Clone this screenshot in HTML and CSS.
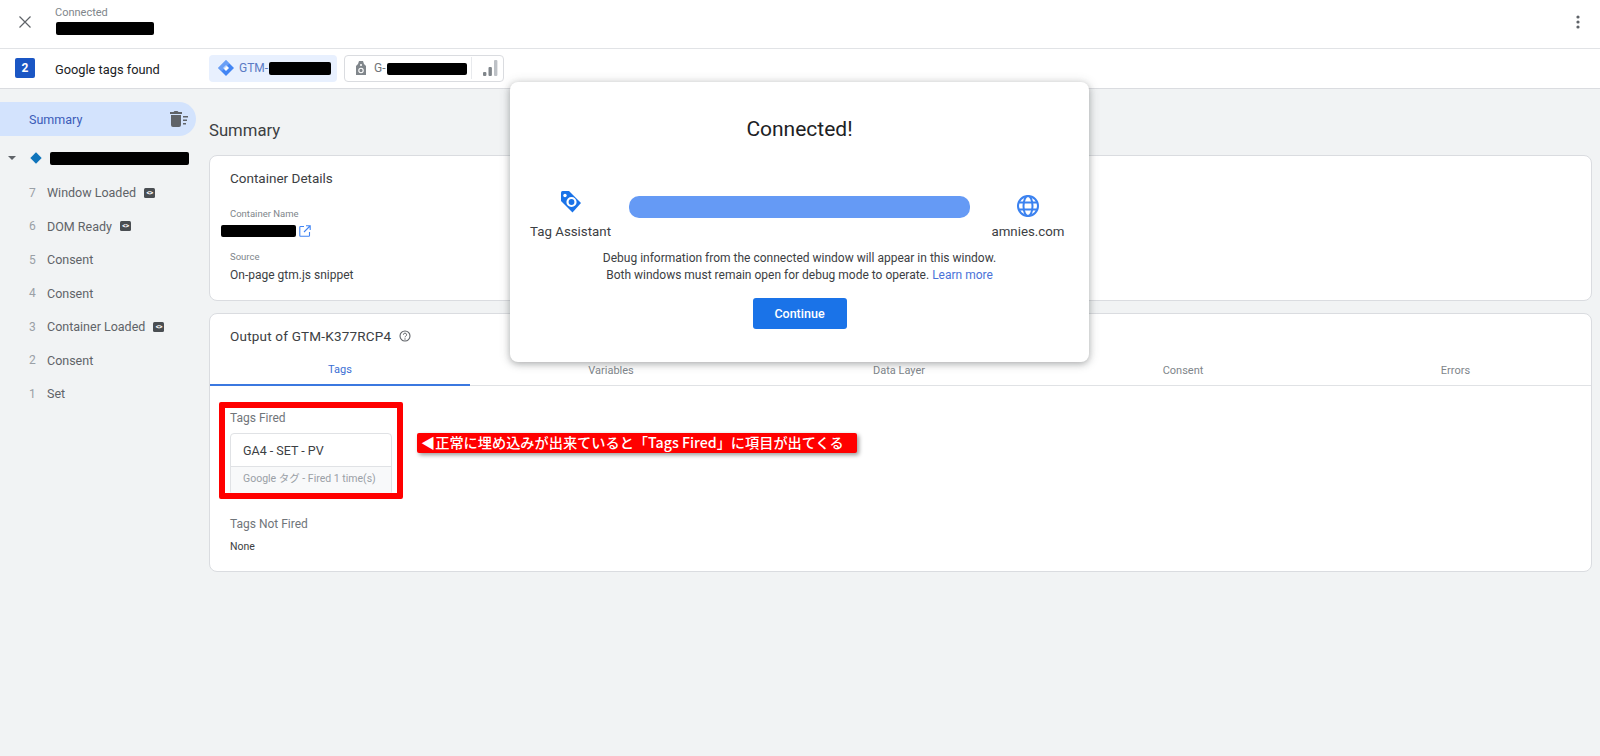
FILE: index.html
```html
<!DOCTYPE html>
<html lang="en">
<head>
<meta charset="utf-8">
<title>Tag Assistant</title>
<link rel="stylesheet" href="styles.css">
</head>
<body>
<header class="topbar">
  <svg class="close" viewBox="0 0 14 14" width="14" height="14"><path d="M1.500 1.500l11 11M12.500 1.500l-11 11" stroke="#5f6368" stroke-width="1.200" fill="none"/></svg>
  <div class="conn">
    <div class="conn-label">Connected</div>
    <div class="redact r-url"></div>
  </div>
  <svg class="dots" viewBox="0 0 4 14" width="4" height="14"><circle cx="2" cy="2" r="1.600" fill="#5f6368"/><circle cx="2" cy="7" r="1.600" fill="#5f6368"/><circle cx="2" cy="12" r="1.600" fill="#5f6368"/></svg>
</header>
<div class="tagsbar">
  <span class="count">2</span>
  <span class="found">Google tags found</span>
  <div class="chip chip-gtm">
    <svg viewBox="0 0 18 18" width="18" height="18"><path d="M9 1l8 8-8 8-8-8z" fill="#4285f4"/><path d="M9 6l3 3-3 3-3-3z" fill="#fff"/><path d="M9 1l3.500 3.500L5 12 1 9z" fill="#8ab4f8" opacity=".55"/></svg>
    <span class="chip-text">GTM-</span><span class="redact r-gtm"></span>
  </div>
  <div class="chip chip-g">
    <svg viewBox="0 0 12 16" width="12" height="16"><path d="M4 1h4l1 3 2 2v9H1V6l2-2z" fill="#80868b"/><circle cx="6" cy="5" r="1" fill="#fff"/><circle cx="6" cy="10.500" r="2.200" fill="none" stroke="#fff" stroke-width="1.100"/></svg>
    <span class="chip-text grey">G-</span><span class="redact r-g"></span>
    <span class="chip-div"></span>
    <svg viewBox="0 0 15 16" width="15" height="16"><rect x="0" y="12" width="3.400" height="4" rx="1" fill="#80868b"/><rect x="5.500" y="7" width="3.400" height="9" rx="1" fill="#80868b"/><rect x="11" y="0" width="3.400" height="16" rx="1" fill="#bdc1c6"/></svg>
  </div>
</div>
<div class="app">
  <nav class="side">
    <div class="side-summary">
      <span>Summary</span>
      <svg viewBox="0 0 18 16" width="18" height="16"><path d="M1 4h10v10a2 2 0 0 1-2 2H3a2 2 0 0 1-2-2zM0 1h3.500l1-1h3l1 1H12v2H0z" fill="#5f6368"/><path d="M13 5h5v1.500h-5zM13 8.500h4V10h-4zM13 12h3v1.500h-3z" fill="#5f6368"/></svg>
    </div>
    <div class="side-head">
      <span class="caret"></span>
      <span class="mini-diamond"></span>
      <span class="redact r-side"></span>
    </div>
    <ul class="events">
      <li><span class="num">7</span>Window Loaded<span class="code">&lt;&gt;</span></li>
      <li><span class="num">6</span>DOM Ready<span class="code">&lt;&gt;</span></li>
      <li><span class="num">5</span>Consent</li>
      <li><span class="num">4</span>Consent</li>
      <li><span class="num">3</span>Container Loaded<span class="code">&lt;&gt;</span></li>
      <li><span class="num">2</span>Consent</li>
      <li><span class="num">1</span>Set</li>
    </ul>
  </nav>
  <main class="main">
    <h1 class="page-title">Summary</h1>
    <section class="card card-details">
      <h2 class="card-title">Container Details</h2>
      <div class="field-label">Container Name</div>
      <div class="name-row">
        <span class="redact r-name"></span>
        <svg viewBox="0 0 12 12" width="12" height="12"><path d="M5 1.500H1.500a.7.7 0 0 0-.7.700v8.300a.7.7 0 0 0 .7.700h8.300a.7.7 0 0 0 .7-.7V7M7 .8h4.200V5M11 1L5 7" fill="none" stroke="#4285f4" stroke-width="1.100"/></svg>
      </div>
      <div class="field-label source">Source</div>
      <div class="field-value">On-page gtm.js snippet</div>
    </section>
    <section class="card card-output">
      <h2 class="card-title output-title">Output of GTM-K377RCP4
        <svg viewBox="0 0 12 12" width="12" height="12"><circle cx="6" cy="6" r="5" fill="none" stroke="#5f6368" stroke-width="1.100"/><path d="M4.400 4.700A1.600 1.600 0 1 1 6.700 6.200C6.200 6.500 6 6.800 6 7.300" fill="none" stroke="#5f6368" stroke-width="1"/><circle cx="6" cy="9" r=".7" fill="#5f6368"/></svg>
      </h2>
      <div class="tabs">
        <div class="tab active">Tags</div>
        <div class="tab">Variables</div>
        <div class="tab">Data Layer</div>
        <div class="tab">Consent</div>
        <div class="tab">Errors</div>
      </div>
      <div class="panel">
        <h3 class="panel-label">Tags Fired</h3>
        <div class="tile">
          <div class="tile-title">GA4 - SET - PV</div>
          <div class="tile-foot">Google タグ - Fired 1 time(s)</div>
        </div>
        <h3 class="panel-label not-fired">Tags Not Fired</h3>
        <div class="none">None</div>
      </div>
    </section>
  </main>
</div>

<div class="highlight"></div>
<div class="callout">◀正常に埋め込みが出来ていると「Tags Fired」に項目が出てくる</div>

<div class="modal">
  <h2 class="modal-title">Connected!</h2>
  <div class="modal-flow">
    <div class="end end-left">
      <svg viewBox="0 0 24 24" width="24" height="24"><path d="M2 2.500A1.500 1.500 0 0 1 3.500 1H10l12 12-8.500 9.500L2 11z" fill="#1a73e8"/><circle cx="6" cy="5.500" r="1.700" fill="#fff"/><circle cx="12.500" cy="12" r="4" fill="none" stroke="#fff" stroke-width="2.200"/></svg>
      <span>Tag Assistant</span>
    </div>
    <div class="modal-bar"></div>
    <div class="end end-right">
      <svg viewBox="0 0 24 24" width="24" height="24"><g fill="none" stroke="#3b82f0" stroke-width="2"><circle cx="12" cy="12" r="10"/><ellipse cx="12" cy="12" rx="4.500" ry="10"/><path d="M2.800 8.500h18.400M2.800 15.500h18.400"/></g></svg>
      <span>amnies.com</span>
    </div>
  </div>
  <p class="modal-text">Debug information from the connected window will appear in this window.<br>Both windows must remain open for debug mode to operate. <a class="learn">Learn more</a></p>
  <button class="continue">Continue</button>
</div>
</body>
</html>
```
FILE: styles.css
```css
* { box-sizing: border-box; }
html, body { margin: 0; height: 100%; overflow: hidden; }
body { font-family: Roboto, "Noto Sans CJK JP", sans-serif; background: #f1f3f4; color: #3c4043; position: relative; }
h1, h2, h3, p, ul { margin: 0; padding: 0; font-weight: 400; }
ul { list-style: none; }
.redact { display: inline-block; background: #000; border-radius: 2px; }

.topbar { height: 49px; background: #fff; border-bottom: 1px solid #e1e3e6; display: flex; align-items: center; padding: 0 20px 4px 18px; }
.close { margin-right: 23px; flex: none; }
.conn { flex: 1; padding: 2px 0 5px; }
.conn-label { font-size: 11px; line-height: 12px; color: #80868b; margin-bottom: 3px; }
.r-url { display: block; width: 98px; height: 13px; margin-left: 1px; }

.tagsbar { height: 40px; background: #fff; border-bottom: 1px solid #dadce0; display: flex; align-items: center; padding: 0 0 1px 15px; }
.count { width: 20px; height: 20px; border-radius: 2px; background: #1a56c4; color: #fff; font-size: 12px; font-weight: 700; display: flex; align-items: center; justify-content: center; }
.found { font-size: 12.800px; color: #202124; margin-left: 20px; width: 154px; padding-top: 2px; }
.chip { height: 27px; display: flex; align-items: center; border-radius: 4px; }
.chip-gtm { width: 128px; background: #e8f0fe; padding-left: 8px; }
.chip-text { font-size: 12px; color: #5b7bc4; margin-left: 4px; }
.chip-text.grey { color: #70757a; margin-left: 7px; }
.r-gtm { width: 62px; height: 13px; margin: 1px 0 0 1px; }
.chip-g { width: 160px; margin-left: 7px; border: 1px solid #dadce0; padding-left: 10px; }
.r-g { width: 80px; height: 12px; margin: 2px 0 0 1px; }
.chip-div { width: 1px; height: 22px; background: #e8eaed; margin: 0 11px 0 4px; }

.app { display: flex; height: 667px; }
.side { width: 209px; flex: none; padding-top: 13px; }
.side-summary { width: 196px; height: 34px; background: #d3e3fd; border-radius: 0 17px 17px 0; display: flex; align-items: center; justify-content: space-between; padding: 0 8px 0 29px; font-size: 12.500px; color: #3b5cb8; }
.side-head { display: flex; align-items: center; height: 20px; margin-top: 12px; padding-left: 8px; }
.caret { width: 0; height: 0; border: 4px solid transparent; border-top: 4px solid #5f6368; border-bottom: 0; }
.mini-diamond { width: 8px; height: 8px; background: #0f74bb; transform: rotate(45deg); margin-left: 16px; }
.r-side { width: 139px; height: 13px; margin-left: 10px; }
.events { padding-top: 8px; }
.events li { height: 33.500px; display: flex; align-items: center; font-size: 12.500px; color: #5f6368; }
.num { width: 47px; padding-left: 29px; color: #9aa0a6; font-size: 12px; }
.code { width: 11px; height: 10px; background: #4a4e52; color: #fff; border-radius: 1.500px; font-size: 7px; line-height: 10px; text-align: center; margin-left: 8px; font-weight: 700; letter-spacing: -.5px; }

.main { flex: 1; padding-right: 8px; }
.page-title { font-size: 16.700px; line-height: 20px; color: #3c4043; margin-top: 32px; }
.card { background: #fff; border: 1px solid #dadce0; border-radius: 8px; }
.card-details { height: 146px; margin-top: 14px; padding: 13px 20px; }
.card-title { font-size: 13.500px; line-height: 18px; color: #3c4043; }
.field-label { font-size: 9.500px; line-height: 12px; color: #80868b; margin-top: 21px; }
.name-row { display: flex; align-items: center; gap: 3px; margin: 4px 0 0 -9px; height: 14px; }
.r-name { width: 75px; height: 12px; }
.field-label.source { margin-top: 13px; }
.field-value { font-size: 12px; line-height: 14px; margin-top: 5px; color: #3c4043; }
.card-output { height: 259px; margin-top: 12px; }
.output-title { display: flex; align-items: center; gap: 7px; padding: 13px 20px 0; letter-spacing: .2px; }
.output-title svg { margin-left: 1px; }
.tabs { display: grid; grid-template-columns: 260px 282px 294px 274px 1fr; height: 40px; margin-top: 1px; border-bottom: 1px solid #e0e2e5; }
.tab { display: flex; align-items: center; justify-content: center; font-size: 11px; color: #80868b; height: 39px; padding-top: 9px; }
.tab.active { color: #3b6fd4; border-bottom: 2px solid #3b78e0; height: 40px; }
.panel { padding: 25px 20px 0; }
.panel-label { font-size: 12px; line-height: 14px; color: #70757a; }
.tile { width: 162px; height: 62px; margin-top: 8px; border: 1px solid #e0e2e5; border-radius: 4px; overflow: hidden; }
.tile-title { height: 33px; padding: 0 12px; font-size: 12.500px; line-height: 33px; color: #3c4043; border-bottom: 1px solid #e0e2e5; }
.tile-foot { height: 29px; background: #f8f9fa; padding: 0 12px; font-size: 10.500px; line-height: 24px; color: #9aa0a6; white-space: nowrap; }
.panel-label.not-fired { margin-top: 22px; }
.none { font-size: 10.500px; line-height: 14px; margin-top: 9px; color: #3c4043; }

.highlight { position: absolute; left: 219px; top: 402px; width: 184px; height: 97px; border: 6px solid #f00; border-radius: 2px; }
.callout { position: absolute; left: 417px; top: 433px; width: 440px; height: 20px; background: #f00; color: #fff; border-radius: 2px; box-shadow: 2px 2px 4px rgba(0,0,0,.4); font-family: "Noto Sans CJK JP", sans-serif; font-size: 14.200px; font-weight: 500; line-height: 18px; padding-left: 4px; white-space: nowrap; }

.modal { position: absolute; left: 510px; top: 82px; width: 579px; height: 280px; background: #fff; border-radius: 8px; box-shadow: 0 2px 6px rgba(60,64,67,.3), 0 1px 12px rgba(60,64,67,.2); display: flex; flex-direction: column; align-items: center; }
.modal-title { font-size: 21px; line-height: 28px; color: #202124; margin-top: 33px; }
.modal-flow { width: 100%; display: flex; align-items: flex-start; margin-top: 43px; height: 55px; padding-left: 21px; }
.end { flex: none; display: flex; flex-direction: column; align-items: center; font-size: 13.300px; line-height: 17px; color: #3c4043; white-space: nowrap; }
.end-left { width: 79px; padding-top: 4px; gap: 9px; }
.end-right { width: 74px; margin-left: 21px; padding-top: 8px; gap: 5px; }
.modal-bar { flex: none; width: 341px; height: 22px; margin: 10px 0 0 19px; background: #659af5; border-radius: 10px; }
.modal-text { font-size: 12px; line-height: 17px; text-align: center; color: #3c4043; margin-top: 9px; }
.learn { color: #4a72d8; }
.continue { width: 94px; height: 31px; margin-top: 14px; background: #1a73e8; color: #fff; border: 0; border-radius: 3px; font-family: inherit; font-size: 12.500px; font-weight: 500; }
```
